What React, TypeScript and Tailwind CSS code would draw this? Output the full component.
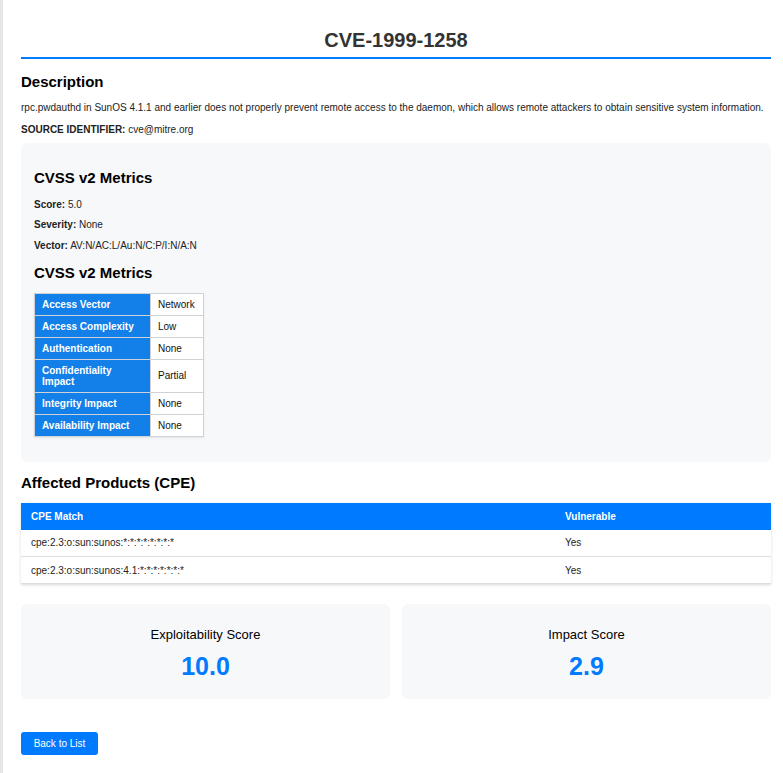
import React from "react";

const metrics: [string, string][] = [
  ["Access Vector", "Network"],
  ["Access Complexity", "Low"],
  ["Authentication", "None"],
  ["Confidentiality Impact", "Partial"],
  ["Integrity Impact", "None"],
  ["Availability Impact", "None"],
];

const cpes: [string, string][] = [
  ["cpe:2.3:o:sun:sunos:*:*:*:*:*:*:*:*", "Yes"],
  ["cpe:2.3:o:sun:sunos:4.1:*:*:*:*:*:*:*", "Yes"],
];

export default function App() {
  return (
    <div
      className="min-h-screen bg-white border-l-[3px] border-l-[#e6e6e6] text-[#222]"
      style={{ fontFamily: '"Liberation Sans", Arial, sans-serif' }}
    >
      <div className="w-[750px] ml-[18px] pb-[18px]">
        <div className="pt-[28px] pb-[5px]">
          <h1 className="text-center text-[20px] leading-[24px] font-bold text-[#333]">CVE-1999-1258</h1>
        </div>
        <div className="h-[1.5px] bg-[#007bff]" />

        <h2 className="mt-[14px] text-[15px] leading-[18px] font-bold text-black">Description</h2>
        <p className="mt-[10px] text-[10px] leading-[14px]">
          rpc.pwdauthd in SunOS 4.1.1 and earlier does not properly prevent remote access to the daemon, which allows remote attackers to obtain sensitive system information.
        </p>
        <p className="mt-[8px] text-[10px] leading-[14px]">
          <span className="font-bold">SOURCE IDENTIFIER:</span> cve@mitre.org
        </p>

        <div className="mt-[6px] bg-[#f7f8fa] rounded-[6px] pt-[26px] pb-[25px] px-[13px]">
          <h3 className="text-[15px] leading-[18px] font-bold text-black">CVSS v2 Metrics</h3>
          <p className="mt-[11px] text-[10px] leading-[14px]">
            <span className="font-bold">Score:</span> 5.0
          </p>
          <p className="mt-[6px] text-[10px] leading-[14px]">
            <span className="font-bold">Severity:</span> None
          </p>
          <p className="mt-[7px] text-[10px] leading-[14px]">
            <span className="font-bold">Vector:</span> AV:N/AC:L/Au:N/C:P/I:N/A:N
          </p>
          <h3 className="mt-[11px] text-[15px] leading-[18px] font-bold text-black">CVSS v2 Metrics</h3>
          <table className="mt-[11px] border-collapse border border-[#cfd3d8] text-[10px] leading-[11px] shadow-[0_1px_2px_rgba(0,0,0,0.08)]">
            <tbody>
              {metrics.map(([k, v]) => (
                <tr key={k}>
                  <th className="w-[116px] bg-[#137fe9] text-white font-bold text-left align-middle py-[5px] pl-[7px] pr-[6px] border border-[#cfd3d8]">
                    {k}
                  </th>
                  <td className="w-[53px] bg-white text-[#111] align-middle py-[5px] pl-[7px] pr-[4px] border border-[#cfd3d8]">
                    {v}
                  </td>
                </tr>
              ))}
            </tbody>
          </table>
        </div>

        <h2 className="mt-[12px] text-[15px] leading-[18px] font-bold text-black">Affected Products (CPE)</h2>
        <table className="mt-[11px] w-full border-collapse bg-white text-[10px] shadow-[0_1px_3px_rgba(0,0,0,0.15)]">
          <thead>
            <tr className="bg-[#007bff] text-white">
              <th className="w-[534px] h-[27px] text-left font-bold pl-[10px]">CPE Match</th>
              <th className="h-[27px] text-left font-bold pl-[10px]">Vulnerable</th>
            </tr>
          </thead>
          <tbody>
            {cpes.map(([c, v]) => (
              <tr key={c} className="border-b border-[#dddddd]">
                <td className="h-[27px] pl-[10px] text-[#222]">{c}</td>
                <td className="h-[27px] pl-[10px] text-[#222]">{v}</td>
              </tr>
            ))}
          </tbody>
        </table>

        <div className="mt-[20px] grid grid-cols-2 gap-[12px]">
          {[
            ["Exploitability Score", "10.0"],
            ["Impact Score", "2.9"],
          ].map(([label, val]) => (
            <div key={label} className="bg-[#f7f8fa] rounded-[6px] pt-[23px] pb-[18px] text-center">
              <div className="text-[13px] leading-[16px] text-black">{label}</div>
              <div className="mt-[8px] text-[25px] leading-[30px] font-bold text-[#007bff]">{val}</div>
            </div>
          ))}
        </div>

        <button className="mt-[33px] h-[23px] w-[77px] rounded-[3px] bg-[#007bff] text-white text-[10px] leading-[23px] text-center">
          Back to List
        </button>
      </div>
    </div>
  );
}
